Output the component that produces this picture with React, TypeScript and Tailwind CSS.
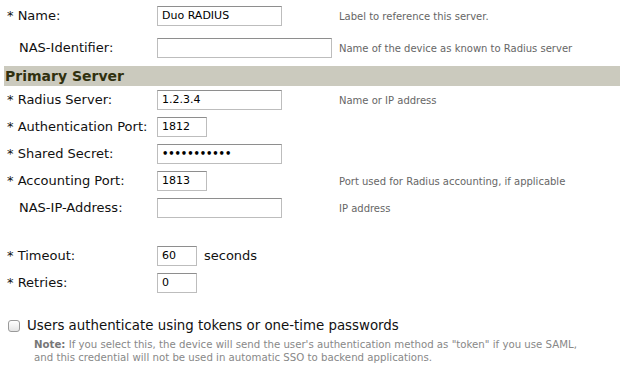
import React from "react";

const inputCls =
  "h-[20px] border border-[#bdbdbd] border-t-[#8e8e8e] bg-white px-[4px] text-[11px] leading-[18px] text-black outline-none";

function Row({
  label,
  required,
  input,
  help,
  h = "h-[27px]",
}: {
  label: string;
  required?: boolean;
  input: React.ReactNode;
  help?: string;
  h?: string;
}) {
  return (
    <div className={`flex items-center ${h}`}>
      <div className="w-[150px] shrink-0 text-[13px] text-[#111]">
        {required ? "* " : <span className="inline-block w-[12px]" />}
        {label}
      </div>
      <div className="w-[182px] shrink-0 flex items-center">{input}</div>
      {help && <div className="pt-[1px] text-[10px] text-[#666]">{help}</div>}
    </div>
  );
}

function Box({ w, value, pwd }: { w: string; value?: string; pwd?: boolean }) {
  return (
    <div className={`${inputCls} ${w} shrink-0 flex items-center`}>
      {pwd ? (
        <span className="text-[10px] font-bold tracking-[-0.1px]">•••••••••••</span>
      ) : (
        <span>{value}</span>
      )}
    </div>
  );
}

export default function App() {
  return (
    <div
      className="w-[620px] h-[375px] bg-white overflow-hidden"
      style={{ fontFamily: '"DejaVu Sans", Verdana, sans-serif' }}
    >
      <div className="pl-[7px]">
        <Row h="h-[32px]" label="Name:" required input={<Box w="w-[125px]" value="Duo RADIUS" />} help="Label to reference this server." />
        <Row h="h-[32px]" label="NAS-Identifier:" input={<Box w="w-[175px]" />} help="Name of the device as known to Radius server" />
      </div>
      <div className="ml-[4px] mt-[2px] h-[20px] bg-[#cbcabe] flex items-center pl-[1px] text-[14px] font-bold text-[#30300f]">
        Primary Server
      </div>
      <div className="pl-[7px]">
        <Row label="Radius Server:" required input={<Box w="w-[125px]" value="1.2.3.4" />} help="Name or IP address" />
        <Row label="Authentication Port:" required input={<Box w="w-[50px]" value="1812" />} />
        <Row label="Shared Secret:" required input={<Box w="w-[125px]" pwd />} />
        <Row label="Accounting Port:" required input={<Box w="w-[50px]" value="1813" />} help="Port used for Radius accounting, if applicable" />
        <Row label="NAS-IP-Address:" input={<Box w="w-[125px]" />} help="IP address" />
        <div className="h-[21px]" />
        <div className="flex items-center h-[27px]">
          <div className="w-[150px] shrink-0 text-[13px] text-[#111]">* Timeout:</div>
          <Box w="w-[40px]" value="60" />
          <div className="ml-[7px] text-[13px] text-[#111]">seconds</div>
        </div>
        <Row label="Retries:" required input={<Box w="w-[40px]" value="0" />} />
      </div>
      <div className="mt-[21px] pl-[8px] flex items-center h-[18px]">
        <div className="w-[12px] h-[12px] rounded-[3px] border border-[#9a9a9a] bg-gradient-to-b from-white to-[#e4e4e4] shrink-0" />
        <div className="ml-[7px] text-[13.35px] text-[#111]">Users authenticate using tokens or one-time passwords</div>
      </div>
      <div className="pl-[34px] mt-[3px] text-[10.2px] leading-[13px] text-[#888]">
        <div>
          <span className="font-bold text-[#777]">Note:</span> If you select this, the device will send the user's authentication method as "token" if you use SAML,
        </div>
        <div>and this credential will not be used in automatic SSO to backend applications.</div>
      </div>
    </div>
  );
}
